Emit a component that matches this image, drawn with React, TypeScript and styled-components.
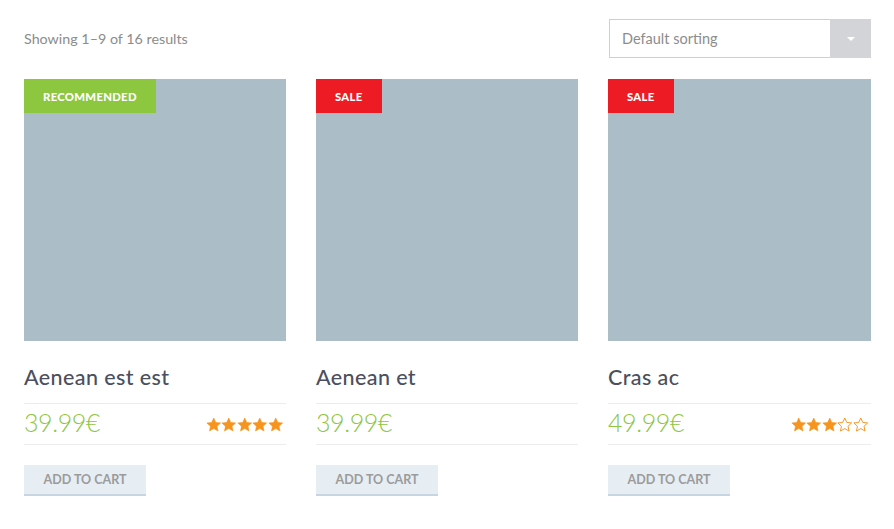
import React from "react";
import styled, { createGlobalStyle } from "styled-components";

const Global = createGlobalStyle`
  html, body { margin: 0; padding: 0; background: #fff; }
  body { font-family: Lato, "Open Sans", sans-serif; }
  * { box-sizing: border-box; }
`;

const Page = styled.div`
  width: 894px;
  padding: 19px 23px 0 24px;
`;

const Toolbar = styled.div`
  display: flex;
  justify-content: space-between;
  align-items: center;
  height: 39px;
  margin-bottom: 21px;
`;

const ResultCount = styled.span`
  font-size: 14.3px;
  color: #8c8c8c;
  padding-bottom: 1px;
`;

const Select = styled.div`
  width: 262px;
  height: 39px;
  display: flex;
  align-items: stretch;
  border: 1px solid #cfcfd3;
  border-right: none;
`;

const SelectLabel = styled.span`
  flex: 1;
  display: flex;
  align-items: center;
  padding-left: 12px;
  font-size: 14.5px;
  color: #8c8c8c;
`;

const SelectArrow = styled.span`
  width: 41px;
  margin: -1px 0;
  background: #d3d4d8;
  display: flex;
  align-items: center;
  justify-content: center;
  &::after {
    content: "";
    border-left: 4.5px solid transparent;
    border-right: 4.5px solid transparent;
    border-top: 4.5px solid #fff;
  }
`;

const Grid = styled.div`
  display: grid;
  grid-template-columns: 262px 262px 1fr;
  column-gap: 30px;
`;

const Card = styled.div`
  display: flex;
  flex-direction: column;
  align-items: flex-start;
`;

const Thumb = styled.div`
  position: relative;
  width: 100%;
  height: 262px;
  background: #abbec7;
`;

const Badge = styled.span<{ $tone: "green" | "red" }>`
  position: absolute;
  top: 0;
  left: 0;
  height: 34px;
  padding: 0 19px 0 19px;
  display: flex;
  align-items: center;
  background: ${(p) => (p.$tone === "green" ? "#8dc63f" : "#ed1c24")};
  color: #fff;
  font-size: 11.3px;
  font-weight: 900;
  letter-spacing: 0.3px;
  text-transform: uppercase;
`;

const Title = styled.h2`
  width: 100%;
  margin: 0;
  padding: 24px 0 14px;
  line-height: 24px;
  font-size: 21.5px;
  font-weight: 500;
  letter-spacing: 0.4px;
  color: #4b4f5e;
  border-bottom: 1px solid #ececec;
`;

const PriceRow = styled.div`
  width: 100%;
  height: 41px;
  display: flex;
  justify-content: space-between;
  align-items: center;
  border-bottom: 1px solid #ececec;
`;

const Price = styled.span`
  font-size: 25px;
  font-weight: 300;
  color: #8dc63f;
  letter-spacing: -0.4px;
  padding-bottom: 4px;
`;

const Stars = styled.span`
  display: flex;
  margin-right: 3px;
  margin-top: 1px;
`;

const Button = styled.button`
  margin-top: 20px;
  width: 122px;
  height: 31px;
  border: none;
  border-bottom: 2px solid #c6d5e1;
  background: #e6edf3;
  color: #9b9b9b;
  font-family: inherit;
  font-size: 12.5px;
  font-weight: 700;
  text-transform: uppercase;
  cursor: pointer;
  padding: 0;
`;

const STAR = "M8 0.8l2.1 4.6 5 .5-3.7 3.4 1 4.9L8 11.7l-4.4 2.5 1-4.9L.9 5.9l5-.5z";

const Star = ({ filled }: { filled: boolean }) => (
  <svg width="15.5" height="15" viewBox="0 0 16 15">
    <path
      d={STAR}
      fill={filled ? "#f7941d" : "none"}
      stroke="#f7941d"
      strokeWidth={filled ? 0.6 : 1}
      strokeLinejoin="round"
    />
  </svg>
);

type Product = {
  title: string;
  price: string;
  rating: number;
  badge?: { label: string; tone: "green" | "red" };
};

const products: Product[] = [
  { title: "Aenean est est", price: "39.99€", rating: 5, badge: { label: "Recommended", tone: "green" } },
  { title: "Aenean et", price: "39.99€", rating: 0, badge: { label: "Sale", tone: "red" } },
  { title: "Cras ac", price: "49.99€", rating: 3, badge: { label: "Sale", tone: "red" } },
];

export default function App() {
  return (
    <Page>
      <Global />
      <Toolbar>
        <ResultCount>Showing 1–9 of 16 results</ResultCount>
        <Select>
          <SelectLabel>Default sorting</SelectLabel>
          <SelectArrow />
        </Select>
      </Toolbar>
      <Grid>
        {products.map((p) => (
          <Card key={p.title}>
            <Thumb>{p.badge && <Badge $tone={p.badge.tone}>{p.badge.label}</Badge>}</Thumb>
            <Title>{p.title}</Title>
            <PriceRow>
              <Price>{p.price}</Price>
              {p.rating > 0 && (
                <Stars>
                  {[0, 1, 2, 3, 4].map((i) => (
                    <Star key={i} filled={i < p.rating} />
                  ))}
                </Stars>
              )}
            </PriceRow>
            <Button>Add to cart</Button>
          </Card>
        ))}
      </Grid>
    </Page>
  );
}
